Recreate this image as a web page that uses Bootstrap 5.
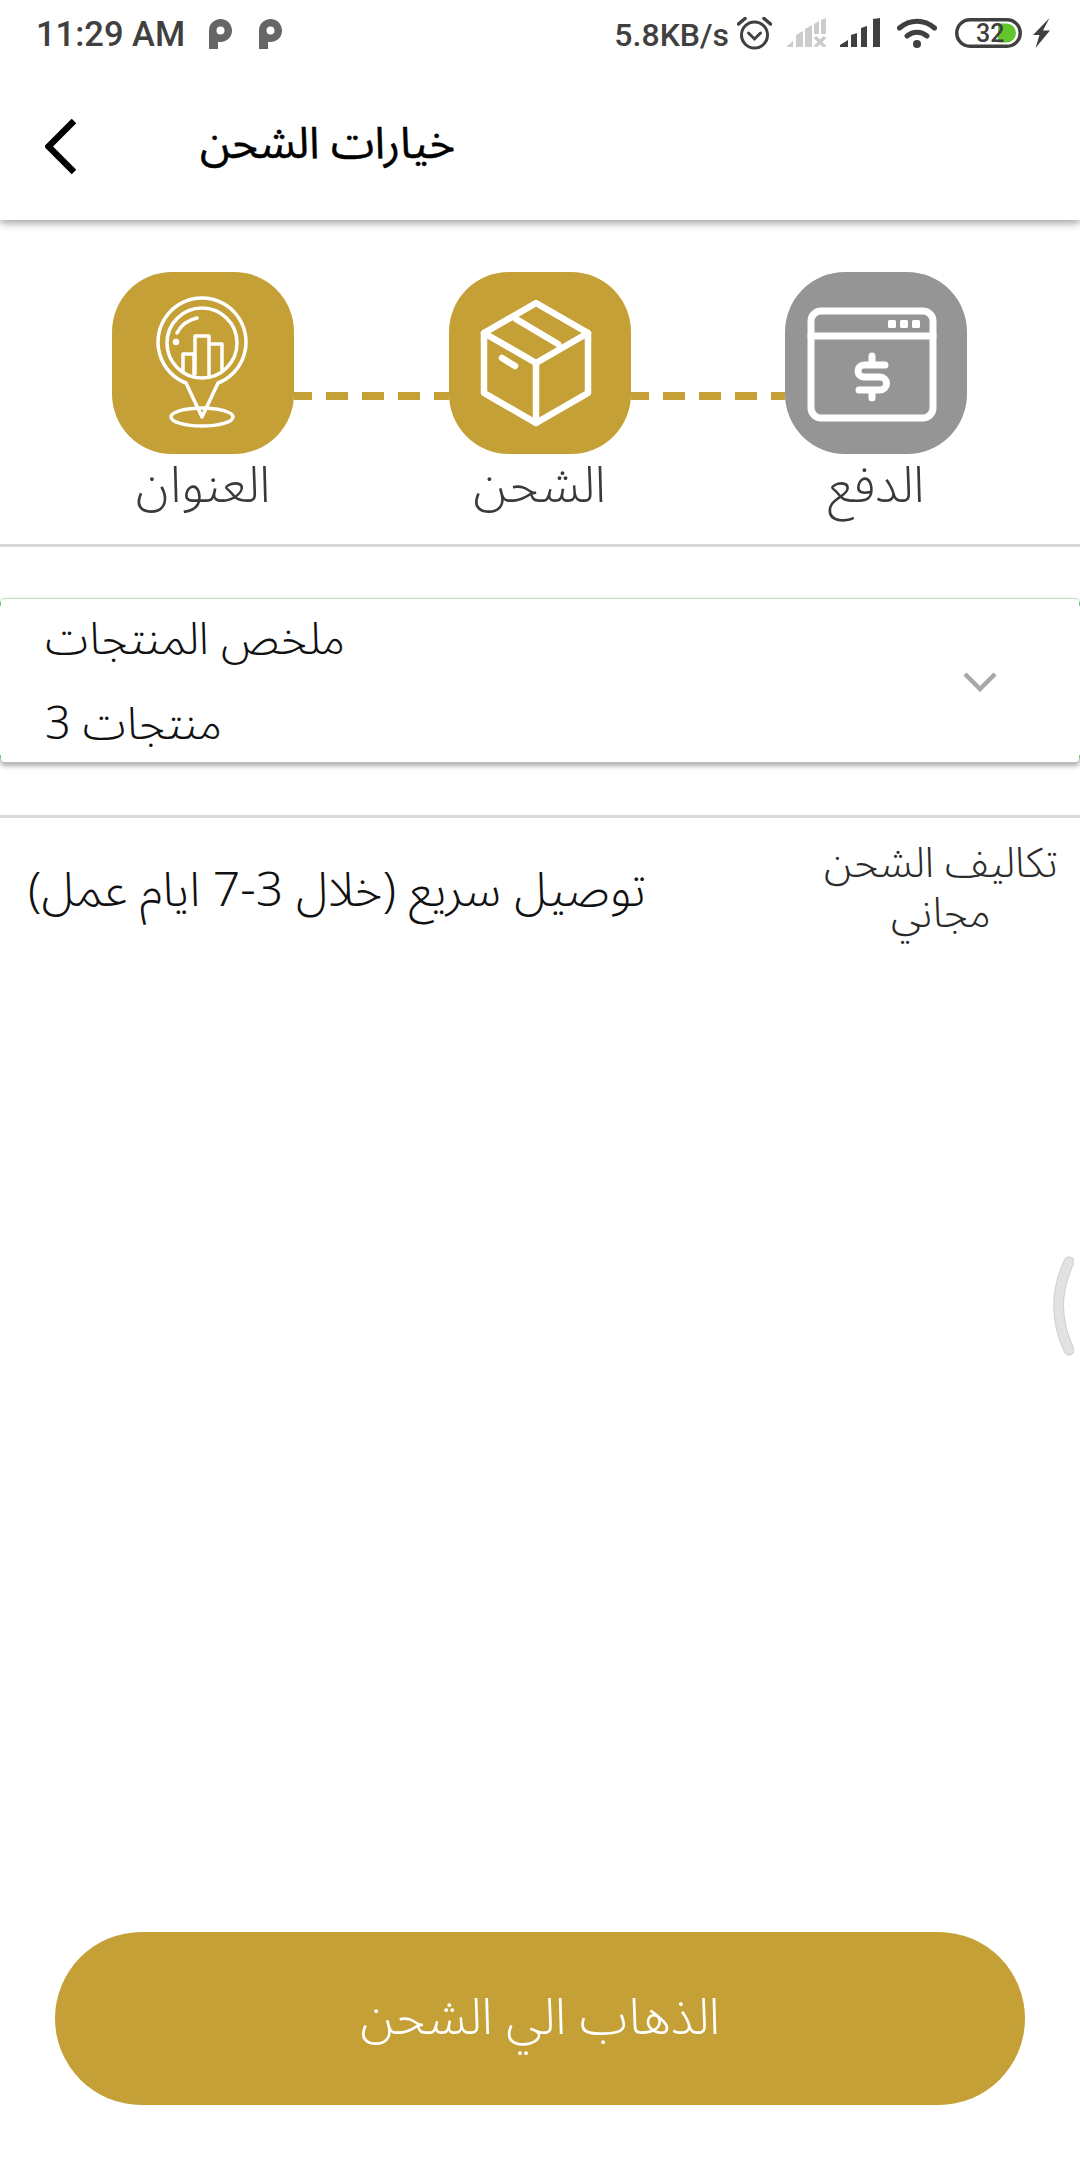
<!DOCTYPE html>
<html lang="ar">
<head>
  <meta charset="UTF-8" />
  <meta name="viewport" content="width=device-width, initial-scale=1.0" />
  <title>خيارات الشحن</title>
  <link href="https://cdn.jsdelivr.net/npm/bootstrap@5.3.0/dist/css/bootstrap.min.css" rel="stylesheet">
  <style>
    body {
      background: #fff;
      color: #111;
      font-family: "Noto Sans Arabic", "DejaVu Sans", sans-serif;
      margin: 0;
    }
    .app-screen {
      width: 1080px;
      height: 2160px;
      overflow: hidden;
      position: relative;
    }
    .app-top {
      height: 220px;
      background: #fff;
      box-shadow: 0 3px 8px rgba(0,0,0,.38);
    }
    .status-row {
      height: 66px;
      padding: 14px 30px 0 36px;
      color: #404040;
      font: 500 34.5px/40px Roboto, sans-serif;
    }
    .speed-text { font-size: 32px; margin-top: 1px; }
    .ic-p1 { margin: 5px 0 0 24px; }
    .ic-p2 { margin: 5px 0 0 27px; }
    .ic-alarm { margin: 3px 0 0 8px; }
    .ic-nosim { margin: 4px 0 0 14px; }
    .ic-signal { margin: 4px 0 0 14px; }
    .ic-wifi { margin: 4px 0 0 17px; }
    .ic-batt { margin: 4px 0 0 18px; }
    .ic-bolt { margin: 4px 0 0 11px; }
    .title-row {
      height: 154px;
      padding: 6px 0 0 45px;
    }
    .page-title {
      margin: 0 0 5px 124px;
      font-size: 44px;
      font-weight: 400;
      color: #000;
      -webkit-text-stroke: .4px #000;
    }
    .steps {
      padding: 52px 113px 0 112px;
      height: 327px;
      border-bottom: 3px solid #d9d9d9;
    }
    .step-item { width: 182px; flex: none; }
    .step-tile {
      width: 182px;
      height: 182px;
      border-radius: 60px;
      background: #c4a037;
    }
    .step-tile.is-off { background: #959595; }
    .step-name {
      font-size: 50px;
      font-weight: 300;
      line-height: 50px;
      color: #3a3a3a;
      margin-top: 7px;
      white-space: nowrap;
    }
    .step-link {
      flex: 1;
      height: 8px;
      margin-top: 120px;
      background: repeating-linear-gradient(90deg, #c4a037 0 18px, transparent 18px 32px, #c4a037 32px 36px);
    }
    .summary-box {
      margin-top: 51px;
      height: 165px;
      background-color: #fff;
      background-image: linear-gradient(#7cc777, #7cc777), linear-gradient(#7cc777, #7cc777), linear-gradient(#7cc777, #7cc777), linear-gradient(#7cc777, #7cc777);
      background-size: 1px 7px;
      background-repeat: no-repeat;
      background-position: 0 0, 100% 0, 0 100%, 100% 100%;
      border-top: 1px solid #bfe3bd;
      border-bottom: 1px solid #bdbdbd;
      border-radius: 5px;
      box-shadow: 0 3px 5px rgba(0,0,0,.32);
      padding: 3px 83px 0 45px;
    }
    .summary-text { font-size: 45px; line-height: 85px; color: #111; font-weight: 300; }
    .line-two { height: 3px; background: #d9d9d9; margin-top: 52px; }
    .ship-row { padding: 21px 22px 0 28px; }
    .ship-name { font-size: 48px; font-weight: 300; line-height: 60px; margin-top: 22px; color: #111; }
    .ship-cost { font-size: 41.5px; font-weight: 300; line-height: 50px; color: #2b2b2b; text-align: center; }
    .go-btn {
      display: block;
      margin: auto 55px 55px;
      width: 970px;
      height: 173px;
      border: 0;
      border-radius: 87px;
      background: #c4a037;
      color: #fff;
      font-size: 50px;
      font-weight: 300;
    }
    .edge-handle { position: absolute; right: 6px; top: 1256px; }
  </style>
</head>
<body>
  <div class="app-screen d-flex flex-column">
    <div class="app-top">
      <div class="status-row d-flex justify-content-between align-items-start">
        <div class="d-flex align-items-start">
          <span>11:29 AM</span>
          <svg class="ic-p1" width="23" height="30" viewBox="0 0 23 30" fill="#666"><path fill-rule="evenodd" d="M0 30V11.500a11.500 11.500 0 1 1 9 11.200V30zM11.500 7.500a4 4 0 1 0 0 8 4 4 0 0 0 0-8z"/></svg>
          <svg class="ic-p2" width="23" height="30" viewBox="0 0 23 30" fill="#666"><path fill-rule="evenodd" d="M0 30V11.500a11.500 11.500 0 1 1 9 11.200V30zM11.500 7.500a4 4 0 1 0 0 8 4 4 0 0 0 0-8z"/></svg>
        </div>
        <div class="d-flex align-items-start">
          <span class="speed-text">5.8KB/s</span>
          <svg class="ic-alarm" width="35" height="33" viewBox="0 0 35 33" fill="none" stroke="#404040" stroke-width="3" stroke-linecap="round"><circle cx="17.500" cy="18" r="13"/><path d="M11.500 16l6 6 6-6"/><path d="M1.500 7L8 1.500M33.500 7L27 1.500" stroke-width="3.500"/></svg>
          <svg class="ic-nosim" width="40" height="29" viewBox="0 0 40 29" fill="#ccc"><path d="M0 29l7-6v6zM10 29V17l7-4v16zM19 29V11l7-4v22zM28 16V6l5-3v13zM35 16V2l5-2v16z"/><path d="M29 19l10 10M39 19L29 29" stroke="#ccc" stroke-width="3.500" fill="none"/></svg>
          <svg class="ic-signal" width="40" height="29" viewBox="0 0 40 29" fill="#404040"><path d="M0 29v-2l8-5v7zM11 29V17l6-2v14zM21 29V10l6-2v21zM33 29V1l7-1v29z"/></svg>
          <svg class="ic-wifi" width="40" height="30" viewBox="0 0 40 30" fill="none" stroke="#404040" stroke-width="5" stroke-linecap="round"><path d="M2.500 10C13 1 27 1 37.500 10M10 18c6-5 14-5 20 0"/><circle cx="20" cy="26" r="4" fill="#404040" stroke="none"/></svg>
          <svg class="ic-batt" width="67" height="30" viewBox="0 0 67 30"><rect x="1.750" y="1.750" width="63.500" height="26.500" rx="13.250" fill="none" stroke="#404040" stroke-width="3.500"/><path d="M43 5.500h8.500a9.500 9.500 0 0 1 0 19H43z" fill="#62c52e"/><text x="21" y="24" font-family="Roboto, sans-serif" font-size="25" font-weight="500" fill="#404040">32</text></svg>
          <svg class="ic-bolt" width="17" height="30" viewBox="0 0 17 30" fill="#404040"><path d="M16.500 0L0 17h6.500L2.500 30 17 12.500h-7z"/></svg>
        </div>
      </div>
      <div class="title-row d-flex align-items-center">
        <svg width="31" height="55" viewBox="0 0 31 55" fill="none" stroke="#000" stroke-width="6.500"><path d="M29 2L3.500 27.500 29 53"/></svg>
        <span class="page-title" dir="rtl">خيارات الشحن</span>
      </div>
    </div>

    <div class="steps d-flex align-items-start">
      <div class="step-item d-flex flex-column align-items-center">
        <div class="step-tile">
          <svg width="182" height="182" viewBox="0 0 182 182" fill="none" stroke="#fff" stroke-width="3.500" stroke-linecap="round" stroke-linejoin="round">
            <path d="M74 111a44 44 0 1 1 32 0L90 145z"/>
            <circle cx="90" cy="71" r="35"/>
            <ellipse cx="90" cy="145" rx="31" ry="9"/>
            <path d="M65 61c4-8 11-13 20-15M71 99V82h11v20M83 102V64h14v39M97 72h13v26"/>
            <circle cx="64" cy="70" r="1.500"/>
          </svg>
        </div>
        <div class="step-name" dir="rtl">العنوان</div>
      </div>
      <div class="step-link"></div>
      <div class="step-item d-flex flex-column align-items-center">
        <div class="step-tile">
          <svg width="182" height="182" viewBox="0 0 182 182" fill="none" stroke="#fff" stroke-width="6.500" stroke-linejoin="round" stroke-linecap="round">
            <path d="M87 31l52 30v60l-52 30-52-30V61z"/>
            <path d="M35 61l52 30 52-30M87 91v60M67 47l42 25"/>
            <path d="M53 86l13 8"/>
          </svg>
        </div>
        <div class="step-name" dir="rtl">الشحن</div>
      </div>
      <div class="step-link"></div>
      <div class="step-item d-flex flex-column align-items-center">
        <div class="step-tile is-off">
          <svg width="182" height="182" viewBox="0 0 182 182" fill="none" stroke="#fff" stroke-width="7" stroke-linecap="round">
            <rect x="26" y="39" width="122" height="107" rx="10"/>
            <path d="M26 64h122"/>
            <path d="M100 93H79a6 6 0 0 0 0 12h16a6.500 6.500 0 0 1 0 13H74M87 84v7M87 120v6"/>
            <g fill="#fff" stroke="none">
              <rect x="103" y="48" width="8" height="8" rx="1.500"/>
              <rect x="115" y="48" width="8" height="8" rx="1.500"/>
              <rect x="127" y="48" width="8" height="8" rx="1.500"/>
            </g>
          </svg>
        </div>
        <div class="step-name" dir="rtl">الدفع</div>
      </div>
    </div>

    <div class="summary-box d-flex justify-content-between align-items-center">
      <div class="summary-text">
        <div dir="rtl" class="text-start">ملخص المنتجات</div>
        <div dir="rtl" class="text-start">منتجات 3</div>
      </div>
      <svg width="34" height="20" viewBox="0 0 34 20" fill="none" stroke="#a8a8a8" stroke-width="4.500"><path d="M2 2l15 15L32 2"/></svg>
    </div>
    <div class="line-two"></div>

    <div class="ship-row d-flex justify-content-between align-items-start">
      <div class="ship-name" dir="rtl">توصيل سريع (خلال 3-7 ايام عمل)</div>
      <div class="ship-cost">
        <div dir="rtl">تكاليف الشحن</div>
        <div dir="rtl">مجاني</div>
      </div>
    </div>

    <button type="button" class="btn go-btn" dir="rtl">الذهاب الي الشحن</button>

    <svg class="edge-handle" width="22" height="100" viewBox="0 0 22 100" fill="none" stroke-linecap="round">
      <path d="M17 6C3 36 3 64 17 94" stroke="#cfcfcf" stroke-width="11"/>
      <path d="M17 6C3 36 3 64 17 94" stroke="#e2e2e2" stroke-width="9"/>
    </svg>
  </div>
  <script src="https://cdn.jsdelivr.net/npm/bootstrap@5.3.0/dist/js/bootstrap.bundle.min.js"></script>
</body>
</html>
